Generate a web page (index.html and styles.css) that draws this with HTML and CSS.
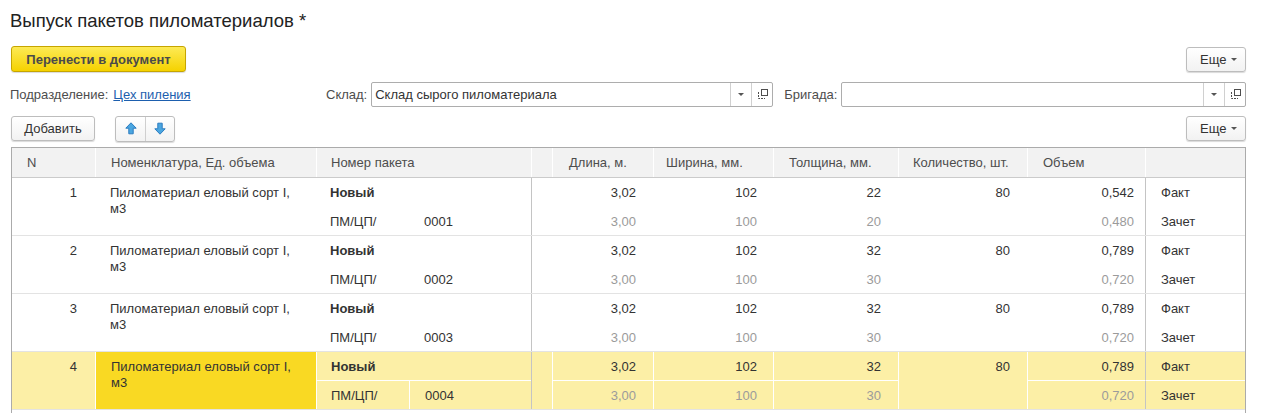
FILE: index.html
```html
<!DOCTYPE html>
<html lang="ru">
<head>
<meta charset="utf-8">
<title>Выпуск пакетов пиломатериалов</title>
<link rel="stylesheet" href="styles.css">
</head>
<body>
<div class="page">
  <h1 class="title">Выпуск пакетов пиломатериалов *</h1>

  <div class="bar bar-main">
    <button class="btn btn-primary">Перенести в документ</button>
    <button class="btn btn-more">Еще <span class="caret"></span></button>
  </div>

  <div class="filters">
    <div class="f-unit">
      <span class="label">Подразделение:</span>
      <a class="link" href="#">Цех пиления</a>
    </div>
    <div class="f-field f-store">
      <span class="label">Склад:</span>
      <div class="input">
        <span class="input-text">Склад сырого пиломатериала</span>
        <span class="input-btn"><span class="caret"></span></span>
        <span class="input-btn">
          <svg width="11" height="11" viewBox="0 0 11 11"><rect x="4.5" y="0.5" width="6" height="6" fill="none" stroke="#4d4d4d"/><path d="M1.5 3 V9.5 H8" fill="none" stroke="#4d4d4d" stroke-dasharray="2 1"/></svg>
        </span>
      </div>
    </div>
    <div class="f-field f-brigade">
      <span class="label">Бригада:</span>
      <div class="input">
        <span class="input-text"></span>
        <span class="input-btn"><span class="caret"></span></span>
        <span class="input-btn">
          <svg width="11" height="11" viewBox="0 0 11 11"><rect x="4.5" y="0.5" width="6" height="6" fill="none" stroke="#4d4d4d"/><path d="M1.5 3 V9.5 H8" fill="none" stroke="#4d4d4d" stroke-dasharray="2 1"/></svg>
        </span>
      </div>
    </div>
  </div>

  <div class="bar bar-table">
    <div class="bar-left">
      <button class="btn btn-add">Добавить</button>
      <div class="btn-group">
        <button class="btn-icon">
          <svg width="12" height="13" viewBox="0 0 12 13"><path d="M6 0.8 L11.2 6.2 H8.2 V11.8 H3.8 V6.2 H0.8 Z" fill="#4aa6e0" stroke="#2c7cc0" stroke-width="1" stroke-linejoin="round"/></svg>
        </button>
        <button class="btn-icon">
          <svg width="12" height="13" viewBox="0 0 12 13"><path d="M6 12.2 L11.2 6.8 H8.2 V1.2 H3.8 V6.8 H0.8 Z" fill="#4aa6e0" stroke="#2c7cc0" stroke-width="1" stroke-linejoin="round"/></svg>
        </button>
      </div>
    </div>
    <button class="btn btn-more">Еще <span class="caret"></span></button>
  </div>

  <div class="table">
    <div class="thead">
      <div class="th">N</div>
      <div class="th">Номенклатура, Ед. объема</div>
      <div class="th">Номер пакета</div>
      <div class="th"></div>
      <div class="th">Длина, м.</div>
      <div class="th">Ширина, мм.</div>
      <div class="th">Толщина, мм.</div>
      <div class="th">Количество, шт.</div>
      <div class="th">Объем</div>
      <div class="th"></div>
    </div>

    <div class="row">
      <div class="c c-n">1</div>
      <div class="c c-name">Пиломатериал еловый сорт I, м3</div>
      <div class="c c-new">Новый</div>
      <div class="c c-pref">ПМ/ЦП/</div>
      <div class="c c-num">0001</div>
      <div class="c c-pic"></div>
      <div class="c r1 c-len">3,02</div>
      <div class="c r1 c-wid">102</div>
      <div class="c r1 c-thk">22</div>
      <div class="c c-qty">80</div>
      <div class="c r1 c-vol">0,542</div>
      <div class="c r1 c-kind">Факт</div>
      <div class="c r2 c-len dim">3,00</div>
      <div class="c r2 c-wid dim">100</div>
      <div class="c r2 c-thk dim">20</div>
      <div class="c r2 c-vol dim">0,480</div>
      <div class="c r2 c-kind">Зачет</div>
    </div>

    <div class="row">
      <div class="c c-n">2</div>
      <div class="c c-name">Пиломатериал еловый сорт I, м3</div>
      <div class="c c-new">Новый</div>
      <div class="c c-pref">ПМ/ЦП/</div>
      <div class="c c-num">0002</div>
      <div class="c c-pic"></div>
      <div class="c r1 c-len">3,02</div>
      <div class="c r1 c-wid">102</div>
      <div class="c r1 c-thk">32</div>
      <div class="c c-qty">80</div>
      <div class="c r1 c-vol">0,789</div>
      <div class="c r1 c-kind">Факт</div>
      <div class="c r2 c-len dim">3,00</div>
      <div class="c r2 c-wid dim">100</div>
      <div class="c r2 c-thk dim">30</div>
      <div class="c r2 c-vol dim">0,720</div>
      <div class="c r2 c-kind">Зачет</div>
    </div>

    <div class="row">
      <div class="c c-n">3</div>
      <div class="c c-name">Пиломатериал еловый сорт I, м3</div>
      <div class="c c-new">Новый</div>
      <div class="c c-pref">ПМ/ЦП/</div>
      <div class="c c-num">0003</div>
      <div class="c c-pic"></div>
      <div class="c r1 c-len">3,02</div>
      <div class="c r1 c-wid">102</div>
      <div class="c r1 c-thk">32</div>
      <div class="c c-qty">80</div>
      <div class="c r1 c-vol">0,789</div>
      <div class="c r1 c-kind">Факт</div>
      <div class="c r2 c-len dim">3,00</div>
      <div class="c r2 c-wid dim">100</div>
      <div class="c r2 c-thk dim">30</div>
      <div class="c r2 c-vol dim">0,720</div>
      <div class="c r2 c-kind">Зачет</div>
    </div>

    <div class="row sel">
      <div class="c c-n">4</div>
      <div class="c c-name">Пиломатериал еловый сорт I, м3</div>
      <div class="c c-new">Новый</div>
      <div class="c c-pref">ПМ/ЦП/</div>
      <div class="c c-num">0004</div>
      <div class="c c-pic"></div>
      <div class="c r1 c-len">3,02</div>
      <div class="c r1 c-wid">102</div>
      <div class="c r1 c-thk">32</div>
      <div class="c c-qty">80</div>
      <div class="c r1 c-vol">0,789</div>
      <div class="c r1 c-kind">Факт</div>
      <div class="c r2 c-len dim">3,00</div>
      <div class="c r2 c-wid dim">100</div>
      <div class="c r2 c-thk dim">30</div>
      <div class="c r2 c-vol dim">0,720</div>
      <div class="c r2 c-kind">Зачет</div>
    </div>
  </div>
</div>
</body>
</html>
```

FILE: styles.css
```css
* { box-sizing: border-box; }

html, body {
  margin: 0;
  padding: 0;
  background: #fff;
}

body {
  font-family: "Liberation Sans", Arial, sans-serif;
  font-size: 13px;
  color: #333;
  overflow: hidden;
}

.page {
  width: 1262px;
  height: 413px;
  padding: 10px 16px 0 0;
}

.title {
  margin: 0 0 0 10px;
  height: 22px;
  font-size: 18.5px;
  line-height: 22px;
  font-weight: normal;
  color: #222;
}

/* toolbars */
.bar {
  display: flex;
  justify-content: space-between;
  align-items: center;
  padding-left: 11px;
}

.bar-main {
  margin-top: 14px;
  height: 26px;
}

.bar-table {
  margin-top: 9px;
  height: 25px;
}

.bar-left {
  display: flex;
  align-items: center;
  gap: 20px;
}

.btn {
  font-family: inherit;
  font-size: 13px;
  color: #333;
  height: 25px;
  padding: 0 12px;
  border: 1px solid #bdbdbd;
  border-radius: 3px;
  background: linear-gradient(#ffffff, #f2f2f2);
  box-shadow: 0 1px 1px rgba(0, 0, 0, 0.15);
  display: flex;
  align-items: center;
  justify-content: center;
  cursor: pointer;
}

.btn-primary {
  width: 175px;
  height: 26px;
  font-weight: bold;
  color: #4a4a4a;
  border-color: #c6a500;
  background: linear-gradient(#fdea55, #f5d200);
}

.btn-more {
  width: 60px;
  padding: 0 8px 0 13px;
  justify-content: space-between;
}

.btn-add {
  width: 84px;
}

.caret {
  display: inline-block;
  width: 0;
  height: 0;
  border-left: 3px solid transparent;
  border-right: 3px solid transparent;
  border-top: 3px solid #555;
}

.btn-group {
  display: flex;
  height: 26px;
  border: 1px solid #bdbdbd;
  border-radius: 3px;
  background: linear-gradient(#ffffff, #f2f2f2);
  box-shadow: 0 1px 1px rgba(0, 0, 0, 0.15);
}

.btn-icon {
  width: 29px;
  height: 24px;
  border: 0;
  background: transparent;
  display: flex;
  align-items: center;
  justify-content: center;
  padding: 0;
}

.btn-icon + .btn-icon {
  border-left: 1px solid #cfcfcf;
}

/* filters */
.filters {
  display: flex;
  align-items: center;
  margin-top: 10px;
  height: 25px;
  padding-left: 10px;
}

.label {
  color: #4d4d4d;
}

.f-unit {
  flex: none;
  width: 316px;
  display: flex;
  gap: 5px;
}

.link {
  color: #1d5fae;
  text-decoration: underline;
}

.f-field {
  display: flex;
  align-items: center;
  gap: 4px;
}

.f-store .input {
  width: 402px;
}

.f-brigade {
  flex: 1;
  margin-left: 11px;
}

.f-brigade .input {
  flex: 1;
}

.input {
  display: flex;
  height: 25px;
  border: 1px solid #adadad;
  border-radius: 2px;
  background: #fff;
}

.input-text {
  flex: 1;
  padding-left: 3px;
  line-height: 23px;
  color: #333;
}

.input-btn {
  width: 21px;
  border-left: 1px solid #d0d0d0;
  display: flex;
  align-items: center;
  justify-content: center;
}

/* table */
.table {
  margin: 6px 0 0 11px;
  width: 1235px;
  height: 270px;
  border: 1px solid #ababab;
  border-bottom: 0;
}

.thead,
.row {
  display: grid;
  grid-template-columns: 83px 221px 93px 122px 21px 101px 120px 125px 129px 118px 100px;
}

.thead {
  height: 30px;
  background: #f2f2f2;
  border-bottom: 1px solid #cbcbcb;
}

.th {
  display: flex;
  align-items: center;
  padding-left: 15px;
  color: #4d4d4d;
  border-left: 1px solid #fff;
}

.th:first-child {
  border-left: 0;
}

.th:nth-child(3) { grid-column: 3 / 5; padding-left: 14px; }
.th:nth-child(5) { padding-left: 16px; }
.th:nth-child(6) { padding-left: 12px; }
.th:nth-child(7) { padding-left: 15px; }
.th:nth-child(8) { padding-left: 14px; }
.th:nth-child(9) { padding-left: 15px; }

.row {
  grid-template-rows: 29px 28px;
  border-bottom: 1px solid #e3e3e3;
}

.c {
  display: flex;
  align-items: center;
  white-space: nowrap;
  overflow: hidden;
}

.c-n {
  grid-column: 1;
  grid-row: 1 / 3;
  align-items: flex-start;
  justify-content: flex-end;
  padding: 7px 18px 0 0;
}

.c-name {
  grid-column: 2;
  grid-row: 1 / 3;
  align-items: flex-start;
  white-space: normal;
  padding: 7px 20px 0 15px;
  line-height: 16px;
}

.c-new {
  grid-column: 3 / 5;
  grid-row: 1;
  padding-left: 14px;
  font-weight: bold;
}

.c-pref {
  grid-column: 3;
  grid-row: 2;
  padding-left: 14px;
}

.c-num {
  grid-column: 4;
  grid-row: 2;
  padding-left: 15px;
}

.c-pic {
  grid-column: 5;
  grid-row: 1 / 3;
  border-left: 1px solid #c4c4c4;
}

.c-len { grid-column: 6; justify-content: flex-end; padding-right: 17px; }
.c-wid { grid-column: 7; justify-content: flex-end; padding-right: 16px; }
.c-thk { grid-column: 8; justify-content: flex-end; padding-right: 17px; }
.c-qty {
  grid-column: 9;
  grid-row: 1 / 3;
  align-items: flex-start;
  justify-content: flex-end;
  padding: 7px 17px 0 0;
}
.c-vol { grid-column: 10; justify-content: flex-end; padding-right: 11px; }
.c-kind {
  grid-column: 11;
  padding-left: 15px;
  border-left: 1px solid #c4c4c4;
}

.r1 { grid-row: 1; }
.r2 { grid-row: 2; }

.dim { color: #9b9b9b; }

/* selected row */
.row.sel {
  background: #fcefa6;
  border-bottom: 1px solid #e3e3e3;
}

.sel .c-name {
  background: #f9d923;
  border-left: 1px solid #fff;
}

.sel .c-new,
.sel .c-pref,
.sel .c-num,
.sel .c-len,
.sel .c-wid,
.sel .c-thk,
.sel .c-qty,
.sel .c-vol {
  border-left: 1px solid #fff;
}

.sel .r1,
.sel .c-new {
  border-bottom: 1px solid #fff;
}
```
